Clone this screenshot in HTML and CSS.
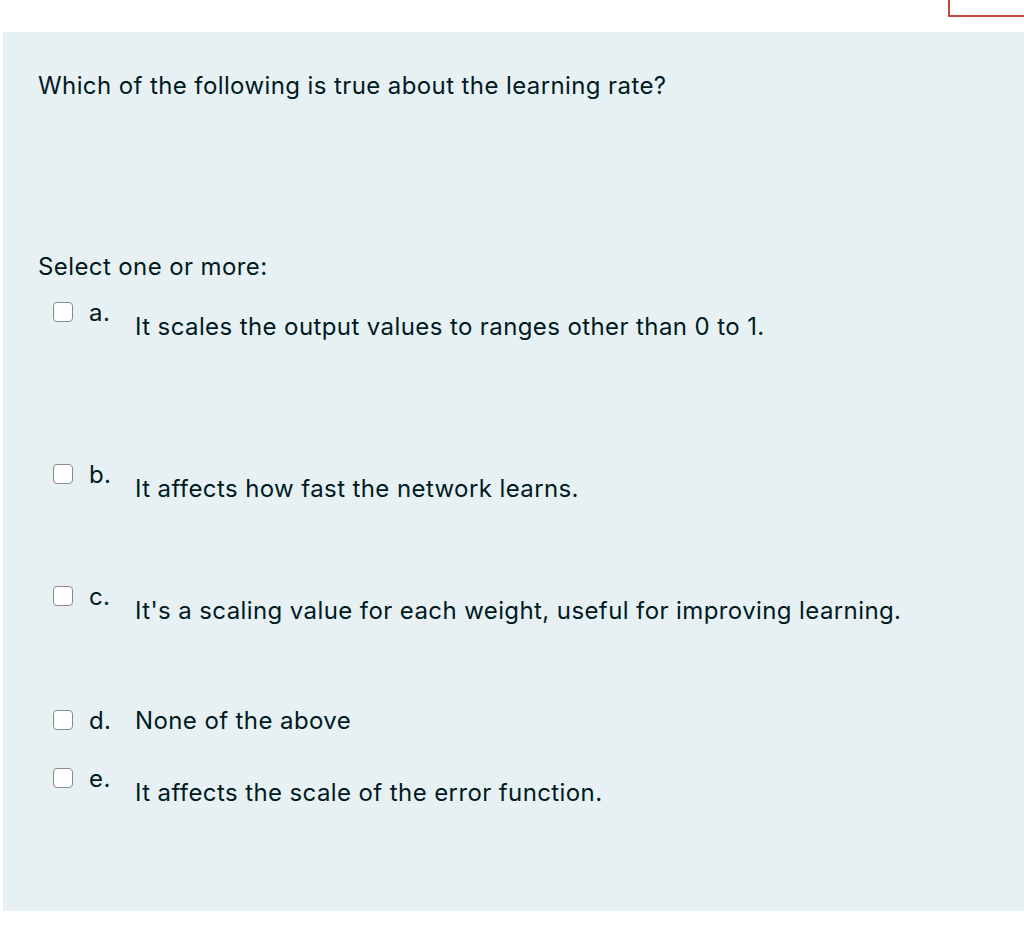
FILE: index.html
```html
<!DOCTYPE html>
<html lang="en">
<head>
<meta charset="utf-8">
<title>Question</title>
<link rel="stylesheet" href="styles.css">
</head>
<body>
<div class="corner-box"></div>
<div class="formulation">
  <div class="qtext">Which of the following is true about the learning rate?</div>
  <div class="prompt">Select one or more:</div>
  <div class="answers">
    <div class="option opt-a">
      <span class="box"></span>
      <span class="letter">a.</span>
      <div class="text raised">It scales the output values to ranges other than 0 to 1.</div>
    </div>
    <div class="option opt-b">
      <span class="box"></span>
      <span class="letter">b.</span>
      <div class="text raised">It affects how fast the network learns.</div>
    </div>
    <div class="option opt-c">
      <span class="box"></span>
      <span class="letter">c.</span>
      <div class="text raised">It's a scaling value for each weight, useful for improving learning.</div>
    </div>
    <div class="option opt-d">
      <span class="box"></span>
      <span class="letter">d.</span>
      <div class="text">None of the above</div>
    </div>
    <div class="option opt-e">
      <span class="box"></span>
      <span class="letter">e.</span>
      <div class="text raised">It affects the scale of the error function.</div>
    </div>
  </div>
</div>
</body>
</html>
```

FILE: styles.css
```css
html, body {
  margin: 0;
  padding: 0;
  background: #ffffff;
}
body {
  font-family: Inter, "Liberation Sans", Arial, sans-serif;
  color: #001a1e;
  font-size: 24px;
  letter-spacing: 0.4px;
  line-height: 32px;
  position: relative;
}
.corner-box {
  position: absolute;
  left: 948px;
  top: -10px;
  width: 100px;
  height: 25px;
  border-left: 2px solid #c0483a;
  border-bottom: 2px solid #c0483a;
}
.formulation {
  margin: 32px 0 0 3px;
  height: 879px;
  background: #e7f1f4;
  padding: 38px 0 0 35px;
  box-sizing: border-box;
}
.prompt {
  margin-top: 149px;
}
.answers {
  margin-top: 14px;
}
.option {
  display: flex;
  align-items: flex-start;
}
.box {
  width: 18px;
  height: 18px;
  border: 1.5px solid #8a8a8a;
  border-radius: 4px;
  background: #ffffff;
  margin: 5px 0 0 15px;
  flex: none;
}
.letter {
  width: 62px;
  padding-left: 16px;
  box-sizing: border-box;
  flex: none;
}
.text.raised {
  margin-top: 14px;
}
.opt-a { height: 162px; }
.opt-b { height: 122px; }
.opt-c { height: 124px; }
.opt-d { height: 58px; }
```
